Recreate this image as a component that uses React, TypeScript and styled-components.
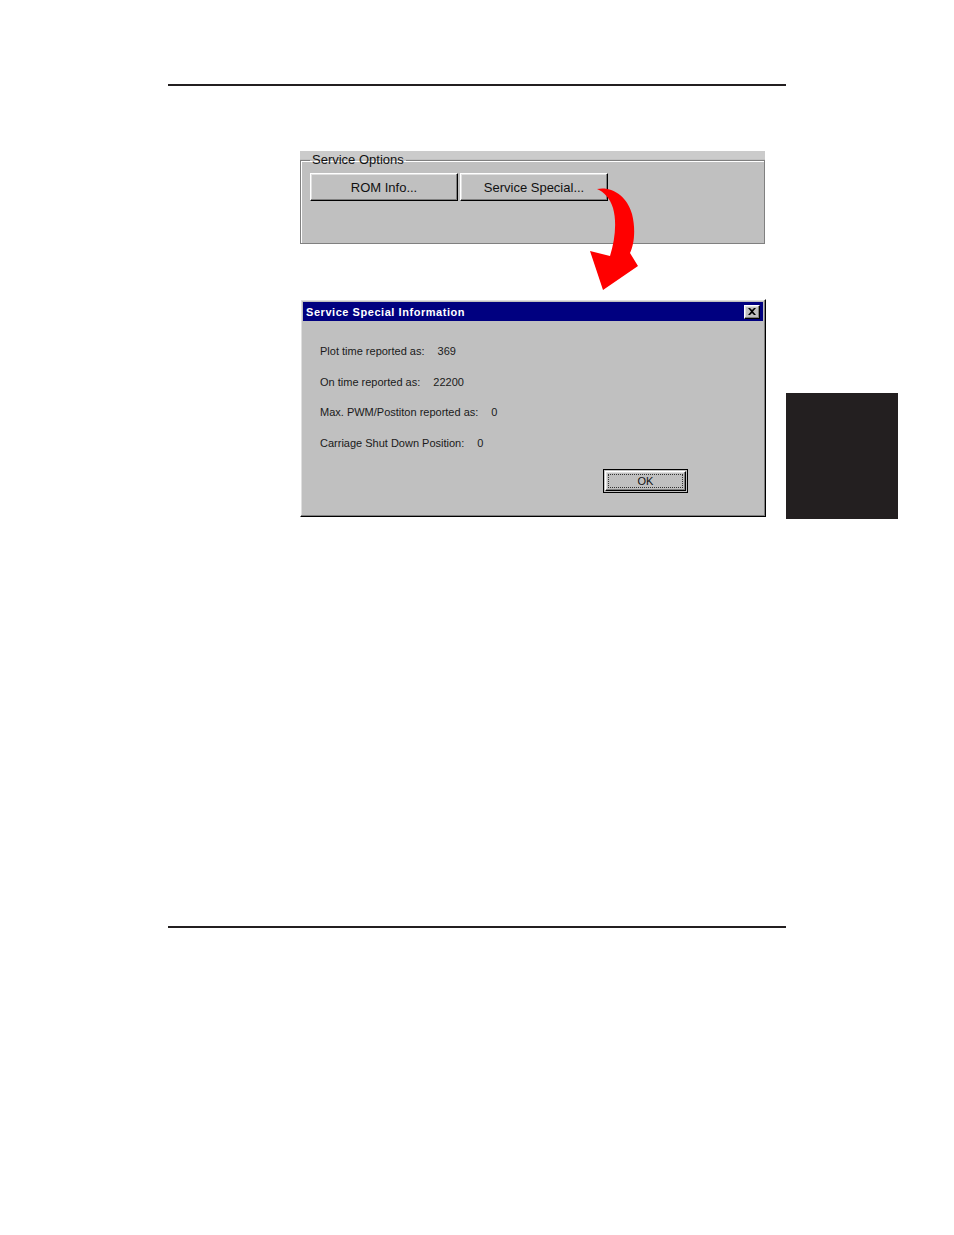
import styled, { createGlobalStyle, css } from 'styled-components'

const GlobalStyle = createGlobalStyle`
    body {
        margin: 0;
        background: #ffffff;
        font-family: 'Liberation Sans', Arial, sans-serif;
    }
`

const bevelOut = css`
    border-top: 1px solid #ffffff;
    border-left: 1px solid #ffffff;
    border-right: 1px solid #000000;
    border-bottom: 1px solid #000000;
    box-shadow: inset -1px -1px 0 #808080, inset 1px 1px 0 #dfdfdf;
`

const Page = styled.div`
    width: 954px;
    height: 1235px;
    padding-top: 84px;
    box-sizing: border-box;
`

const Rule = styled.div`
    margin-left: 168px;
    width: 618px;
    height: 2px;
    background: #231f20;
`

const Middle = styled.div`
    height: 840px;
    display: flex;
    align-items: flex-start;
    padding: 65px 0 0 300px;
    box-sizing: border-box;
`

const Figure = styled.div`
    position: relative;
    width: 466px;
    display: flex;
    flex-direction: column;
    gap: 55px;
`

const SideTab = styled.div`
    margin: 242px 0 0 20px;
    width: 112px;
    height: 126px;
    background: #231f20;
`

/* ---------- Service Options group ---------- */

const OptionsPanel = styled.div`
    width: 465px;
    height: 93px;
    background: linear-gradient(#cbcbcb 0 8px, #c0c0c0 8px);
    padding-top: 2px;
    box-sizing: border-box;
`

const GroupBox = styled.fieldset`
    margin: 0;
    height: 91px;
    box-sizing: border-box;
    border: 1px solid #808080;
    box-shadow: inset 1px 1px 0 #ffffff;
    padding: 6px 0 0 9px;
    display: flex;
    gap: 2px;
    align-items: flex-start;
`

const GroupLegend = styled.legend`
    margin-left: 0;
    padding: 0 2px;
    font-size: 13px;
    color: #111;
    line-height: 14px;
`

const WinButton = styled.button<{ $width: number }>`
    ${bevelOut};
    width: ${({ $width }) => $width}px;
    height: 28px;
    box-sizing: border-box;
    background: #c0c0c0;
    font-family: 'Liberation Sans', Arial, sans-serif;
    font-size: 13px;
    color: #111;
    padding: 0;
`

/* ---------- Dialog ---------- */

const Dialog = styled.div`
    ${bevelOut};
    width: 466px;
    height: 218px;
    box-sizing: border-box;
    background: #c0c0c0;
    padding: 2px;
    display: flex;
    flex-direction: column;
`

const TitleBar = styled.div`
    height: 19px;
    background: #000080;
    display: flex;
    align-items: center;
    justify-content: space-between;
    padding: 0 3px 0 3px;
`

const TitleText = styled.span`
    color: #ffffff;
    font-weight: bold;
    font-size: 11px;
    letter-spacing: 0.55px;
`

const CloseButton = styled.div`
    ${bevelOut};
    width: 16px;
    height: 14px;
    box-sizing: border-box;
    background: #c0c0c0;
    display: flex;
    align-items: center;
    justify-content: center;
`

const DialogBody = styled.div`
    padding: 15px 0 0 17px;
    display: flex;
    flex-direction: column;
`

const InfoRow = styled.div`
    height: 30.5px;
    display: flex;
    align-items: center;
    font-size: 11px;
    color: #1a1a1a;
`

const InfoValue = styled.span`
    margin-left: 13px;
`

const ButtonRow = styled.div`
    display: flex;
    justify-content: flex-end;
    padding-right: 75px;
    margin-top: 11px;
`

const DefaultButton = styled.button`
    width: 85px;
    height: 24px;
    background: #c0c0c0;
    border: 1px solid #000000;
    padding: 1px;
    box-sizing: border-box;
    font-family: 'Liberation Sans', Arial, sans-serif;
    font-size: 11px;
    color: #111;
`

const DefaultButtonFace = styled.span`
    ${bevelOut};
    display: flex;
    height: 100%;
    box-sizing: border-box;
    padding: 2px;
`

const FocusRing = styled.span`
    flex: 1;
    border: 1px dotted #333;
    display: flex;
    align-items: center;
    justify-content: center;
`

const Arrow = styled.svg`
    position: absolute;
    left: 285px;
    top: 34px;
`

const rows = [
    { label: 'Plot time reported as:', value: '369' },
    { label: 'On time reported as:', value: '22200' },
    { label: 'Max. PWM/Postiton reported as:', value: '0' },
    { label: 'Carriage Shut Down Position:', value: '0' },
]

const App = () => {
    return (
        <Page>
            <GlobalStyle />
            <Rule />
            <Middle>
                <Figure>
                    <OptionsPanel>
                        <GroupBox>
                            <GroupLegend>Service Options</GroupLegend>
                            <WinButton $width={148}>ROM Info...</WinButton>
                            <WinButton $width={148}>Service Special...</WinButton>
                        </GroupBox>
                    </OptionsPanel>

                    <Dialog>
                        <TitleBar>
                            <TitleText>Service Special Information</TitleText>
                            <CloseButton>
                                <svg width='8' height='7' viewBox='0 0 8 7'>
                                    <path d='M0 0h2l2 2 2-2h2L5 3.5 8 7H6L4 5 2 7H0l3-3.5z' fill='#000' />
                                </svg>
                            </CloseButton>
                        </TitleBar>
                        <DialogBody>
                            {rows.map((row) => (
                                <InfoRow key={row.label}>
                                    {row.label}
                                    <InfoValue>{row.value}</InfoValue>
                                </InfoRow>
                            ))}
                        </DialogBody>
                        <ButtonRow>
                            <DefaultButton>
                                <DefaultButtonFace>
                                    <FocusRing>OK</FocusRing>
                                </DefaultButtonFace>
                            </DefaultButton>
                        </ButtonRow>
                    </Dialog>

                    <Arrow width='60' height='110' viewBox='585 185 60 110'>
                        <path
                            d='M597 189 C612 186 627 196 632 214 C636 230 634 245 630 253 L638 266 L603 290 L590 251 L610 256 C615 240 617 222 613 208 C610 198 604 192 597 189 Z'
                            fill='#ff0000'
                        />
                    </Arrow>
                </Figure>
                <SideTab />
            </Middle>
            <Rule />
        </Page>
    )
}

export default App
